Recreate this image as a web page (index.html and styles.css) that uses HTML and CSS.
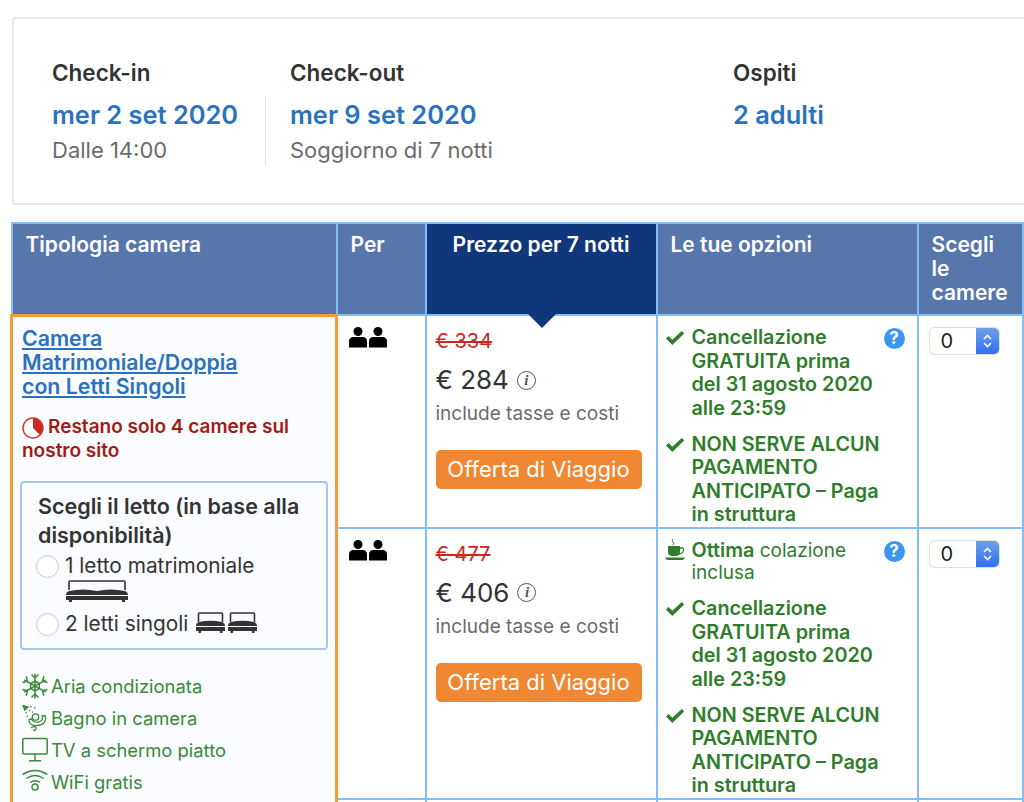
FILE: index.html
```html
<!DOCTYPE html>
<html lang="it">
<head>
<meta charset="utf-8">
<title>Camere</title>
<link rel="stylesheet" href="styles.css">
</head>
<body>
<section class="stay">
  <div class="stay-col col-in">
    <div class="stay-label">Check-in</div>
    <div class="stay-value">mer 2 set 2020</div>
    <div class="stay-sub">Dalle 14:00</div>
  </div>
  <div class="stay-col col-out">
    <div class="stay-label">Check-out</div>
    <div class="stay-value">mer 9 set 2020</div>
    <div class="stay-sub">Soggiorno di 7 notti</div>
  </div>
  <div class="stay-col col-guests">
    <div class="stay-label">Ospiti</div>
    <div class="stay-value">2 adulti</div>
  </div>
</section>

<table class="rooms">
  <colgroup>
    <col class="c-room"><col class="c-per"><col class="c-price"><col class="c-opt"><col class="c-qty">
  </colgroup>
  <thead>
    <tr class="r-head">
      <th>Tipologia camera</th>
      <th>Per</th>
      <th class="th-price">Prezzo per 7 notti</th>
      <th>Le tue opzioni</th>
      <th>Scegli le camere</th>
    </tr>
  </thead>
  <tbody>
    <tr class="r-one">
      <td class="room" rowspan="3">
        <a class="room-title" href="#">Camera Matrimoniale/Doppia con Letti Singoli</a>
        <p class="scarcity">
          <svg class="pie" viewBox="0 0 22 22"><circle cx="11" cy="11" r="10" fill="#fff" stroke="#d8392e" stroke-width="1.500"/><path d="M11 11V1.500A9.500 9.500 0 0 1 17.700 17.700Z" fill="#c9281f"/></svg>Restano solo 4 camere sul nostro sito
        </p>
        <div class="beds">
          <div class="beds-title">Scegli il letto (in base alla disponibilità)</div>
          <div class="bed-opt">
            <span class="radio"></span>
            <div class="bed-text">1 letto matrimoniale
              <svg class="bed-big" viewBox="0 0 64 22"><path d="M4 10V2q0-1 1-1h54q1 0 1 1v8" fill="none" stroke="#333" stroke-width="1.600"/><path d="M1 15q0-3 3-4 14-3 28 0 14-3 28 0 3 1 3 4Z" fill="#333"/><path d="M1 16h62v4H60v2h-3v-2H7v2H4v-2H1Z" fill="#333"/></svg>
            </div>
          </div>
          <div class="bed-opt">
            <span class="radio"></span>
            <div class="bed-text">2 letti singoli
              <svg class="bed-small" viewBox="0 0 31 21"><path d="M3.500 10V2q0-1 1-1h22q1 0 1 1v8" fill="none" stroke="#333" stroke-width="1.600"/><path d="M1 14q0-3 3-4 11-2.500 23 0 3 1 3 4Z" fill="#333"/><path d="M1 15h29v4h-2.500v2h-2.500v-2H6v2H3.500v-2H1Z" fill="#333"/></svg><svg class="bed-small" viewBox="0 0 31 21"><path d="M3.500 10V2q0-1 1-1h22q1 0 1 1v8" fill="none" stroke="#333" stroke-width="1.600"/><path d="M1 14q0-3 3-4 11-2.500 23 0 3 1 3 4Z" fill="#333"/><path d="M1 15h29v4h-2.500v2h-2.500v-2H6v2H3.500v-2H1Z" fill="#333"/></svg>
            </div>
          </div>
        </div>
        <ul class="amen">
          <li><svg class="am-icon" viewBox="0 0 26 26"><g fill="none" stroke="#3a8a3a" stroke-width="1.500"><path d="M13 .5v25M2.200 6.800l21.600 12.400M2.200 19.200L23.800 6.800"/><path d="M9.500 1.500l3.500 3.500 3.500-3.500M9.500 24.500l3.500-3.500 3.500 3.500M.5 9.500l5-1.300-1.300-5M25.500 16.500l-5 1.300 1.300 5M.5 16.500l5 1.300-1.300 5M25.500 9.500l-5-1.300 1.300-5"/><path d="M13 8l4.300 2.500v5L13 18l-4.300-2.500v-5Z"/></g></svg>Aria condizionata</li>
          <li><svg class="am-icon" viewBox="0 0 26 26"><g fill="none" stroke="#3a8a3a" stroke-width="1.300"><path d="M1 .5l5 1.500-3.200 3.200Z" fill="#3a8a3a"/><path d="M8 1.500l1.500.4M12 2.500l1.500.6M7 5l1 .8M10 6.800l1 .8M4 7l.5 1.200M5 10.500l.4 1.300"/><circle cx="13.500" cy="12" r="3.200"/><path d="M7 15q0 5 5.500 5.500 7 .5 10-3.500 2-3 .5-6.500l-3 .5q1.500 3-1 5-3 2-7 .5-2-1-2.500-2.500Q8 14 7 15Z"/><path d="M9 23q3-2.500 5-.5.500 3-3 3"/></g></svg>Bagno in camera</li>
          <li><svg class="am-icon" viewBox="0 0 26 26"><g fill="none" stroke="#3a8a3a" stroke-width="1.500"><rect x=".8" y="1.500" width="24.400" height="15.500" rx="1.500"/><path d="M13 17v6M7 23.800h12"/></g></svg>TV a schermo piatto</li>
          <li><svg class="am-icon" viewBox="0 0 26 26"><g fill="none" stroke="#3a8a3a" stroke-width="1.500"><path d="M.8 5.500q12.200-8 24.400 0M4.500 9.500q8.500-6 17 0M8 13.500q5-3.500 10 0"/><circle cx="13" cy="18" r="3"/></g></svg>WiFi gratis</li>
        </ul>
      </td>
      <td class="per">
        <svg class="people" viewBox="0 0 40 21"><g fill="#000"><circle cx="10" cy="4.500" r="4.500"/><path d="M1 20.500v-6q0-4.500 4.500-4.500h9q4.500 0 4.500 4.500v6ZM21 20.500v-6q0-4.500 4.500-4.500h9q4.500 0 4.500 4.500v6Z"/><circle cx="30" cy="4.500" r="4.500"/></g></svg>
      </td>
      <td class="price">
        <s class="old">€ 334</s>
        <div class="now">€ 284 <span class="info">i</span></div>
        <div class="tax">include tasse e costi</div>
        <button class="deal">Offerta di Viaggio</button>
      </td>
      <td class="opts">
        <div class="opt">
          <svg class="check" viewBox="0 0 20 16"><path d="M1 8.500l2.500-2.500 3.800 3.800L16.800 1l2.400 2.400L7.300 15Z" fill="#2f7d2b"/></svg>
          <div class="opt-text"><b>Cancellazione GRATUITA prima del 31 agosto 2020 alle 23:59</b></div>
          <span class="help">?</span>
        </div>
        <div class="opt">
          <svg class="check" viewBox="0 0 20 16"><path d="M1 8.500l2.500-2.500 3.800 3.800L16.800 1l2.400 2.400L7.300 15Z" fill="#2f7d2b"/></svg>
          <div class="opt-text wide"><b>NON SERVE ALCUN PAGAMENTO ANTICIPATO – Paga in struttura</b></div>
        </div>
      </td>
      <td class="qty"><div class="sel"><span class="sel-val">0</span><span class="sel-btn"><svg viewBox="0 0 10 16"><path d="M1.500 6L5 2.500 8.500 6M1.500 10L5 13.500 8.500 10" fill="none" stroke="#fff" stroke-width="1.600"/></svg></span></div></td>
    </tr>
    <tr class="r-two">
      <td class="per">
        <svg class="people" viewBox="0 0 40 21"><g fill="#000"><circle cx="10" cy="4.500" r="4.500"/><path d="M1 20.500v-6q0-4.500 4.500-4.500h9q4.500 0 4.500 4.500v6ZM21 20.500v-6q0-4.500 4.500-4.500h9q4.500 0 4.500 4.500v6Z"/><circle cx="30" cy="4.500" r="4.500"/></g></svg>
      </td>
      <td class="price">
        <s class="old">€ 477</s>
        <div class="now">€ 406 <span class="info">i</span></div>
        <div class="tax">include tasse e costi</div>
        <button class="deal">Offerta di Viaggio</button>
      </td>
      <td class="opts">
        <div class="opt">
          <svg class="check cup" viewBox="0 0 20 22"><path d="M8 0q-1.500 1.500 0 3t0 3" fill="none" stroke="#2f7d2b"/><path d="M3 7h12v6q0 4-4 4H7q-4 0-4-4Z" fill="#2f7d2b"/><path d="M15 9h1.500q2.500 0 2 2.500-.5 3-4.500 3.500" fill="none" stroke="#2f7d2b" stroke-width="1.300"/><path d="M0 18.500h20q-1 2.500-3 2.500H3q-2 0-3-2.500Z" fill="#2f7d2b"/></svg>
          <div class="opt-text"><b>Ottima</b> colazione inclusa</div>
          <span class="help">?</span>
        </div>
        <div class="opt">
          <svg class="check" viewBox="0 0 20 16"><path d="M1 8.500l2.500-2.500 3.800 3.800L16.800 1l2.400 2.400L7.300 15Z" fill="#2f7d2b"/></svg>
          <div class="opt-text"><b>Cancellazione GRATUITA prima del 31 agosto 2020 alle 23:59</b></div>
        </div>
        <div class="opt">
          <svg class="check" viewBox="0 0 20 16"><path d="M1 8.500l2.500-2.500 3.800 3.800L16.800 1l2.400 2.400L7.300 15Z" fill="#2f7d2b"/></svg>
          <div class="opt-text wide"><b>NON SERVE ALCUN PAGAMENTO ANTICIPATO – Paga in struttura</b></div>
        </div>
      </td>
      <td class="qty"><div class="sel"><span class="sel-val">0</span><span class="sel-btn"><svg viewBox="0 0 10 16"><path d="M1.500 6L5 2.500 8.500 6M1.500 10L5 13.500 8.500 10" fill="none" stroke="#fff" stroke-width="1.600"/></svg></span></div></td>
    </tr>
    <tr class="r-three"><td></td><td></td><td></td><td></td></tr>
  </tbody>
</table>
</body>
</html>
```
FILE: styles.css
```css
html, body { margin: 0; padding: 0; height: 802px; overflow: hidden; background: #fff; }
body {
  font-family: Inter, "Liberation Sans", sans-serif;
  font-size: 18px;
  color: #333;
  padding-top: 17px;
  box-sizing: border-box;
}
.stay {
  margin-left: 12px;
  width: 1012px;
  height: 188px;
  box-sizing: border-box;
  border: 2px solid #e8e8e8;
  border-right: 0;
  border-radius: 3px 0 0 3px;
  display: flex;
  padding-top: 41px;
  padding-left: 38px;
}
.stay-label { font-size: 22.500px; font-weight: 600; line-height: 26px; color: #333; }
.stay-value { font-size: 25.400px; font-weight: 600; line-height: 30px; color: #2a72c0; margin-top: 14px; }
.stay-sub { font-size: 22px; line-height: 26px; color: #6b6b6b; margin-top: 7px; }
.col-in { width: 213px; }
.col-out { width: 442px; padding-left: 25px; position: relative; }
.col-out::before {
  content: "";
  position: absolute;
  left: 0;
  top: 36px;
  height: 70px;
  width: 1px;
  background: #e0e0e0;
}
.col-guests { width: 200px; margin-left: 1px; }

.rooms {
  margin: 17px 0 0 10px;
  width: 1011px;
  table-layout: fixed;
  border-collapse: collapse;
}
.c-room { width: 325px; }
.c-per { width: 89px; }
.c-price { width: 231px; }
.c-opt { width: 261px; }
.c-qty { width: 105px; }
.r-head { height: 92px; }
.r-one { height: 212px; }
.r-two { height: 271px; }
.r-three { height: 4px; }
.rooms th, .rooms td {
  border: 2px solid #84bdf7;
  vertical-align: top;
  box-sizing: border-box;
}
.r-three td { border-bottom: 0; }
.rooms th {
  background: #5676ac;
  color: #fff;
  font-size: 21px;
  font-weight: 600;
  line-height: 24px;
  text-align: left;
  padding: 9px 13px 0;
}
.rooms .th-price {
  background: #10377c;
  position: relative;
  text-align: center;
  padding-left: 8px;
  padding-right: 8px;
}
.th-price::after {
  content: "";
  position: absolute;
  left: 101px;
  bottom: -14px;
  border-style: solid;
  border-width: 14px 14px 0;
  border-color: #10377c transparent transparent;
}
.rooms .room {
  border: 3px solid #f09d38;
  border-bottom: 0;
  background: #fbfcff;
  padding: 9px 7px 0 9px;
}
.room-title {
  display: block;
  width: 230px;
  font-size: 21.300px;
  font-weight: 600;
  line-height: 24px;
  color: #2a72c0;
}
.scarcity {
  margin: 17px 0 0;
  font-size: 19px;
  font-weight: 600;
  line-height: 24px;
  color: #a01c14;
}
.pie { width: 22px; height: 22px; vertical-align: -6px; margin-right: 4px; }
.beds {
  margin: 18px 0 0 -2px;
  box-sizing: border-box;
  width: 308px;
  height: 169px;
  border: 2px solid #a9c5ec;
  border-radius: 4px;
  padding: 9px 16px 0;
}
.beds-title { font-size: 21.500px; font-weight: 600; line-height: 29px; color: #333; }
.bed-opt { display: flex; gap: 6px; margin-left: -2px; margin-top: 2px; margin-bottom: 8px; }
.radio {
  flex: none;
  box-sizing: border-box;
  width: 23px;
  height: 23px;
  margin-top: 3px;
  border-radius: 50%;
  border: 1px solid #cfcfcf;
  box-shadow: inset 0 1px 1px #eee;
  background: #fff;
}
.bed-text { font-size: 20.800px; line-height: 28px; color: #333; }
.bed-big { display: block; width: 64px; height: 22px; }
.bed-small { width: 31px; height: 21px; vertical-align: -2px; margin-left: 1px; }
.amen { list-style: none; margin: 20px 0 0; padding: 0; }
.amen li {
  height: 32px;
  display: flex;
  align-items: center;
  gap: 3px;
  font-size: 18.400px;
  color: #3a8a3a;
}
.am-icon { width: 26px; height: 26px; flex: none; }
.per { padding: 11px 0 0 10px; }
.people { display: block; width: 40px; height: 21px; }
.price { padding: 13px 9px 0; }
.old { display: block; font-size: 20px; line-height: 24px; color: #c8281e; text-decoration: line-through; width: max-content; }
.now { font-size: 26px; line-height: 34px; color: #333; margin-top: 10px; display: flex; align-items: center; gap: 8px; }
.info {
  width: 17px;
  height: 17px;
  border: 1px solid #555;
  border-radius: 50%;
  font: italic 700 15px/17px "Liberation Serif", serif;
  color: #555;
  text-align: center;
}
.tax { font-size: 19px; line-height: 24px; color: #6b6b6b; margin-top: 5px; }
.deal {
  display: block;
  margin-top: 24px;
  width: 206px;
  height: 39px;
  border: 0;
  border-radius: 5px;
  background: #f08833;
  color: #fff;
  font: 400 22px/39px Inter, "Liberation Sans", sans-serif;
  padding: 0;
}
.opts { padding: 10px 0 0 7px; }
.opt { display: flex; margin-bottom: 12.500px; font-size: 19px; line-height: 22.500px; color: #2f7d2b; }
.opt:last-child { margin-bottom: 0; }
.opt b { font-weight: 600; font-size: 19.800px; }
.check { flex: none; width: 20px; height: 16px; margin-top: 4px; margin-right: 7px; }
.cup { height: 22px; margin-top: 0; }
.opt-text { width: 186px; }
.opt-text.wide { width: 190px; }
.help {
  flex: none;
  width: 21px;
  height: 21px;
  margin-left: 6px;
  margin-top: 2px;
  border-radius: 50%;
  background: #3c96f0;
  color: #fff;
  font-size: 17px;
  font-weight: 700;
  line-height: 21px;
  text-align: center;
}
.qty { padding: 12px 0 0 11px; }
.sel {
  width: 69px;
  height: 26px;
  display: flex;
  border-radius: 5px;
  background: #fff;
  box-shadow: 0 0 1px 1px #ddd;
}
.sel-val { flex: 1; padding-left: 11px; font-size: 20px; line-height: 26px; color: #222; }
.sel-btn {
  width: 23px;
  border-radius: 0 5px 5px 0;
  background: linear-gradient(#6f9fe6, #2f6ff5);
  display: flex;
  align-items: center;
  justify-content: center;
}
.sel-btn svg { width: 11px; height: 16px; }
```
